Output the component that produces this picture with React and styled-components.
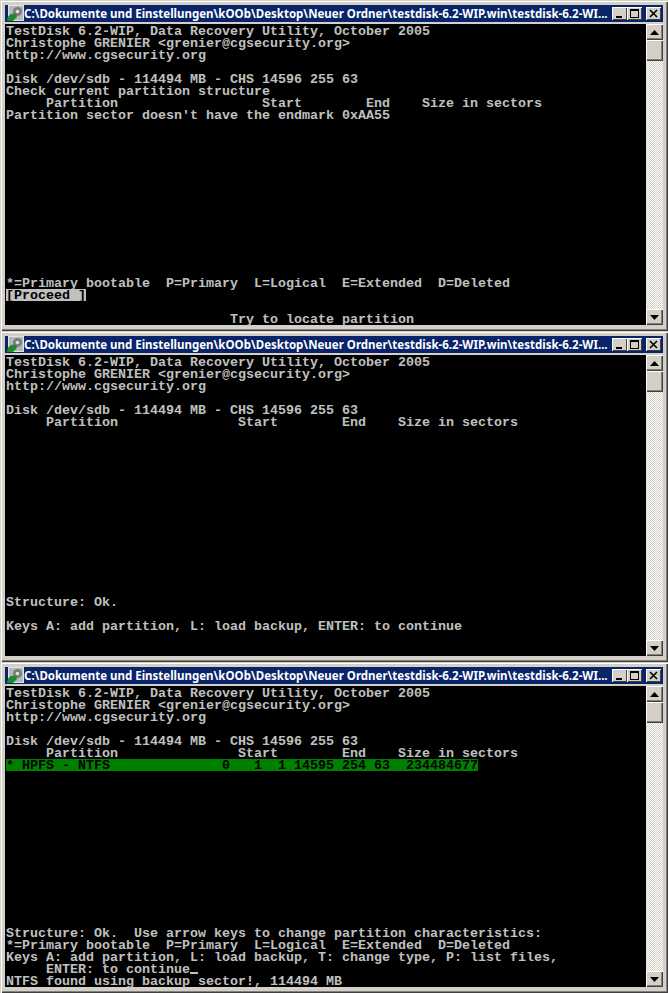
import React from 'react';
import styled, { createGlobalStyle } from 'styled-components';

const Global = createGlobalStyle`
  html, body { margin: 0; padding: 0; background: #d4d0c8; }
`;

const Page = styled.div`
  width: 668px;
  height: 993px;
  display: flex;
  flex-direction: column;
  overflow: hidden;
`;

// One console window, classic raised Win2k frame
const Window = styled.div`
  box-sizing: border-box;
  height: 331px;
  padding: 5px 5px 6px 5px;
  display: flex;
  flex-direction: column;
  gap: 2px;
  background: #d4d0c8;
  box-shadow: inset 1px 1px 0 #d4d0c8, inset 2px 2px 0 #fff, inset -1px -1px 0 #404040, inset -2px -2px 0 #808080;
`;

const TitleBar = styled.div`
  height: 17px;
  flex: none;
  display: flex;
  align-items: center;
  background: #0a246a;
  padding: 0 1px 0 2px;
`;

const TitleText = styled.div`
  flex: 1;
  color: #fff;
  font: bold 11.5px/17px "Noto Sans", "DejaVu Sans", sans-serif;
  white-space: nowrap;
  overflow: hidden;
`;

const CaptionButtons = styled.div`
  display: flex;
  align-items: center;
  margin-right: 1px;
`;

const CaptionButton = styled.div`
  box-sizing: border-box;
  width: 15px;
  height: 13px;
  margin-left: ${({ $gap }) => $gap || 0}px;
  display: flex;
  align-items: center;
  justify-content: center;
  background: #d4d0c8;
  box-shadow: inset 1px 1px 0 #fff, inset -1px -1px 0 #404040;
`;

const Console = styled.div`
  height: 301px;
  flex: none;
  display: flex;
  background: #000;
`;

const Screen = styled.div`
  flex: 1;
  padding-top: 1px;
  font: bold 13.33px/14px "Liberation Mono", monospace;
  color: #c0c0c0;
  white-space: pre;
`;

const Row = styled.div`
  height: 12px;
  padding-left: 1px;
`;

// Selected rows: the cell block is exactly one 12px text row high
const Highlight = styled.span`
  display: inline-block;
  height: 12px;
  vertical-align: top;
  background: ${({ $bg }) => $bg};
  color: #000;
`;

const Cursor = styled.span`
  display: inline-block;
  width: 8px;
  height: 2px;
  background: #c0c0c0;
  vertical-align: -1px;
`;

const ScrollBar = styled.div`
  width: 17px;
  flex: none;
  display: flex;
  flex-direction: column;
  background: repeating-conic-gradient(#d4d0c8 0 25%, #fff 0 50%) 0 0 / 2px 2px;
`;

const Track = styled.div`
  flex: 1;
`;

const ScrollButton = styled.div`
  box-sizing: border-box;
  height: ${({ $h }) => $h || 16}px;
  display: flex;
  align-items: center;
  justify-content: center;
  background: #d4d0c8;
  box-shadow: inset 1px 1px 0 #fff, inset -1px -1px 0 #404040, inset -2px -2px 0 #808080;
`;

const AppIcon = () => (
  <svg width="17" height="17" viewBox="0 0 17 17">
    <rect x="1.5" y="0.5" width="15" height="15" fill="#b8b8b8" stroke="#e4e4e4" />
    <circle cx="10.5" cy="6.5" r="4.5" fill="#7c7c7c" />
    <circle cx="10.5" cy="6.5" r="1.8" fill="#e0e0e0" />
    <path d="M0 16 C0 10 5 7 9 9 L10 12 L6 16 Z" fill="#1c8c2c" />
  </svg>
);

const MinIcon = () => (
  <svg width="9" height="9" viewBox="0 0 9 9"><rect x="1" y="7" width="6" height="2" fill="#000" /></svg>
);
const MaxIcon = () => (
  <svg width="9" height="9" viewBox="0 0 9 9"><path d="M0 0h9v9H0z M1 2v6h7V2z" fillRule="evenodd" fill="#000" /></svg>
);
const CloseIcon = () => (
  <svg width="9" height="9" viewBox="0 0 9 9"><path d="M1 1l7 7M8 1L1 8" stroke="#000" strokeWidth="1.6" /></svg>
);
const Arrow = ({ up }) => (
  <svg width="9" height="5" viewBox="0 0 9 5"><path d={up ? 'M4.5 0L9 5H0z' : 'M0 0h9L4.5 5z'} fill="#000" /></svg>
);

const TITLE = 'C:\\Dokumente und Einstellungen\\kOOb\\Desktop\\Neuer Ordner\\testdisk-6.2-WIP.win\\testdisk-6.2-WI...';

const HEADER = [
  'TestDisk 6.2-WIP, Data Recovery Utility, October 2005',
  'Christophe GRENIER <grenier@cgsecurity.org>',
  'http://www.cgsecurity.org',
  '',
  'Disk /dev/sdb - 114494 MB - CHS 14596 255 63',
];

const LEGEND = '*=Primary bootable  P=Primary  L=Logical  E=Extended  D=Deleted';
const COLUMNS = '     Partition               Start        End    Size in sectors';

const blank = (n) => Array(n).fill('');

const screens = [
  {
    thumb: 21,
    rows: [
      ...HEADER,
      'Check current partition structure',
      '     Partition                  Start        End    Size in sectors',
      "Partition sector doesn't have the endmark 0xAA55",
      ...blank(13),
      LEGEND,
      <Highlight $bg="#c0c0c0">[Proceed ]</Highlight>,
      '',
      '                            Try to locate partition',
    ],
  },
  {
    thumb: 21,
    rows: [
      ...HEADER,
      COLUMNS,
      ...blank(14),
      'Structure: Ok.',
      '',
      'Keys A: add partition, L: load backup, ENTER: to continue',
    ],
  },
  {
    thumb: 21,
    rows: [
      ...HEADER,
      COLUMNS,
      <Highlight $bg="#008000">* HPFS - NTFS              0   1  1 14595 254 63  234484677</Highlight>,
      ...blank(13),
      'Structure: Ok.  Use arrow keys to change partition characteristics:',
      LEGEND,
      'Keys A: add partition, L: load backup, T: change type, P: list files,',
      <>     ENTER: to continue<Cursor /></>,
      'NTFS found using backup sector!, 114494 MB',
    ],
  },
];

const ConsoleWindow = ({ rows, thumb }) => (
  <Window>
    <TitleBar>
      <AppIcon />
      <TitleText>{TITLE}</TitleText>
      <CaptionButtons>
        <CaptionButton><MinIcon /></CaptionButton>
        <CaptionButton><MaxIcon /></CaptionButton>
        <CaptionButton $gap={4}><CloseIcon /></CaptionButton>
      </CaptionButtons>
    </TitleBar>
    <Console>
      <Screen>
        {rows.map((row, i) => <Row key={i}>{row}</Row>)}
      </Screen>
      <ScrollBar>
        <ScrollButton><Arrow up /></ScrollButton>
        <ScrollButton $h={thumb} />
        <Track />
        <ScrollButton><Arrow /></ScrollButton>
      </ScrollBar>
    </Console>
  </Window>
);

export default function App() {
  return (
    <Page>
      <Global />
      {screens.map((s, i) => <ConsoleWindow key={i} rows={s.rows} thumb={s.thumb} />)}
    </Page>
  );
}
